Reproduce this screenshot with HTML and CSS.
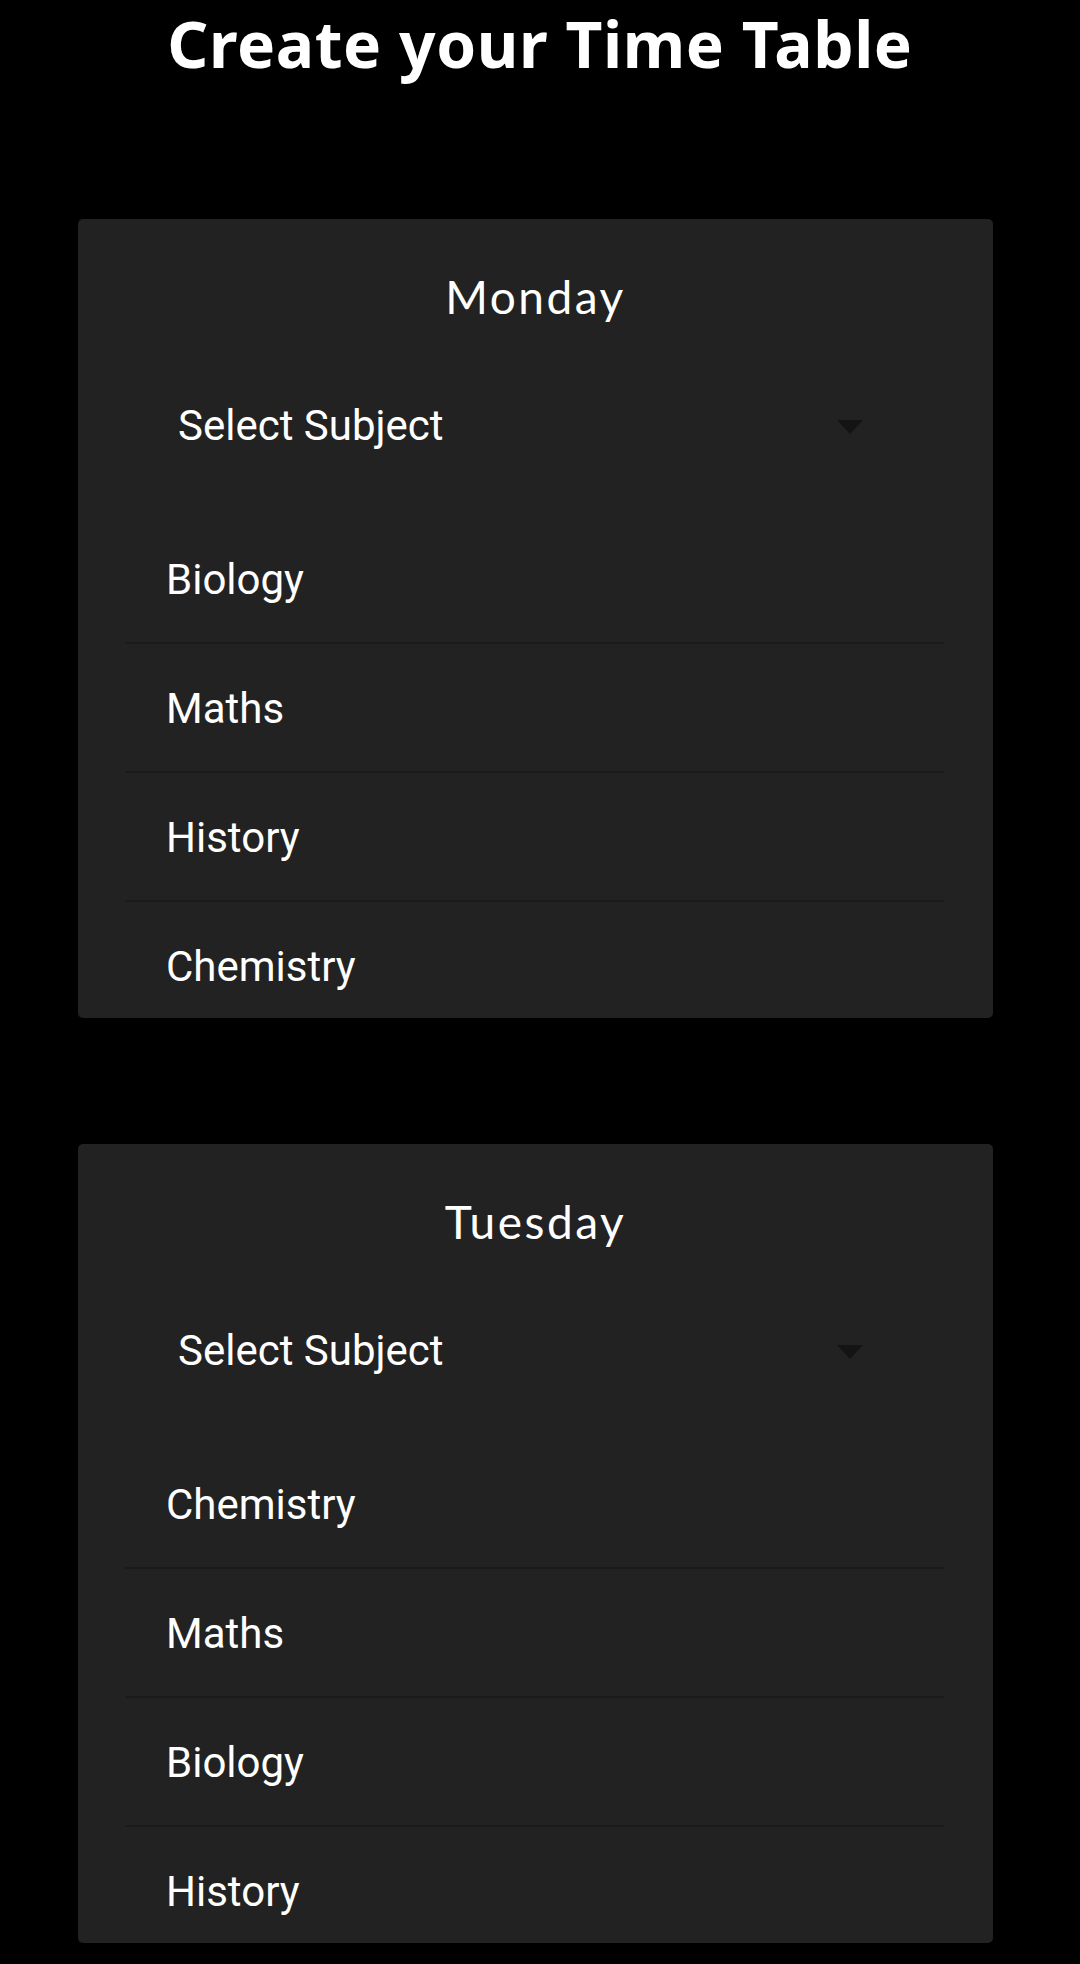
FILE: index.html
```html
<!DOCTYPE html>
<html lang="en">
<head>
<meta charset="utf-8">
<title>Create your Time Table</title>
<link rel="stylesheet" href="styles.css">
</head>
<body>
<h1 class="title">Create your Time Table</h1>
<main class="days">
  <section class="card">
    <h2 class="day">Monday</h2>
    <div class="select">
      <span class="select-label">Select Subject</span>
      <span class="caret"></span>
    </div>
    <ul class="list">
      <li class="item">Biology</li>
      <li class="item">Maths</li>
      <li class="item">History</li>
      <li class="item">Chemistry</li>
    </ul>
  </section>
  <section class="card">
    <h2 class="day">Tuesday</h2>
    <div class="select">
      <span class="select-label">Select Subject</span>
      <span class="caret"></span>
    </div>
    <ul class="list">
      <li class="item">Chemistry</li>
      <li class="item">Maths</li>
      <li class="item">Biology</li>
      <li class="item">History</li>
    </ul>
  </section>
</main>
</body>
</html>
```

FILE: styles.css
```css
html, body {
  margin: 0;
  padding: 0;
  background: #000;
}
body {
  width: 1080px;
  height: 1964px;
  overflow: hidden;
  color: #fff;
  font-family: Roboto, "Liberation Sans", sans-serif;
}
.title {
  margin: 0;
  font-family: "Noto Sans", "Open Sans", sans-serif;
  font-weight: 700;
  font-size: 64px;
  line-height: 88px;
  text-align: center;
  letter-spacing: 0.6px;
}
.days {
  display: flex;
  flex-direction: column;
  gap: 126px;
  margin: 131px 87px 0 78px;
}
.card {
  background: #222222;
  border-radius: 5px;
  height: 799px;
  overflow: hidden;
  padding-top: 51px;
  box-sizing: border-box;
}
.day {
  margin: 0;
  font-family: Lato, "Open Sans", sans-serif;
  font-weight: 400;
  font-size: 46px;
  line-height: 54px;
  text-align: center;
  letter-spacing: 2.5px;
}
.select {
  display: flex;
  align-items: center;
  justify-content: space-between;
  margin: 78px 130px 0 100px;
  height: 47px;
}
.select-label {
  font-size: 42px;
  line-height: 47px;
}
.caret {
  width: 0;
  height: 0;
  border-left: 13px solid transparent;
  border-right: 13px solid transparent;
  border-top: 14px solid #141414;
  margin-top: 2px;
}
.list {
  list-style: none;
  margin: 66px 49px 0 47px;
  padding: 0;
}
.item {
  font-size: 42px;
  line-height: 47px;
  padding: 41px 0 39px 41px;
  border-bottom: 2px solid #1b1b1b;
}
.item:last-child {
  border-bottom: none;
}
```
